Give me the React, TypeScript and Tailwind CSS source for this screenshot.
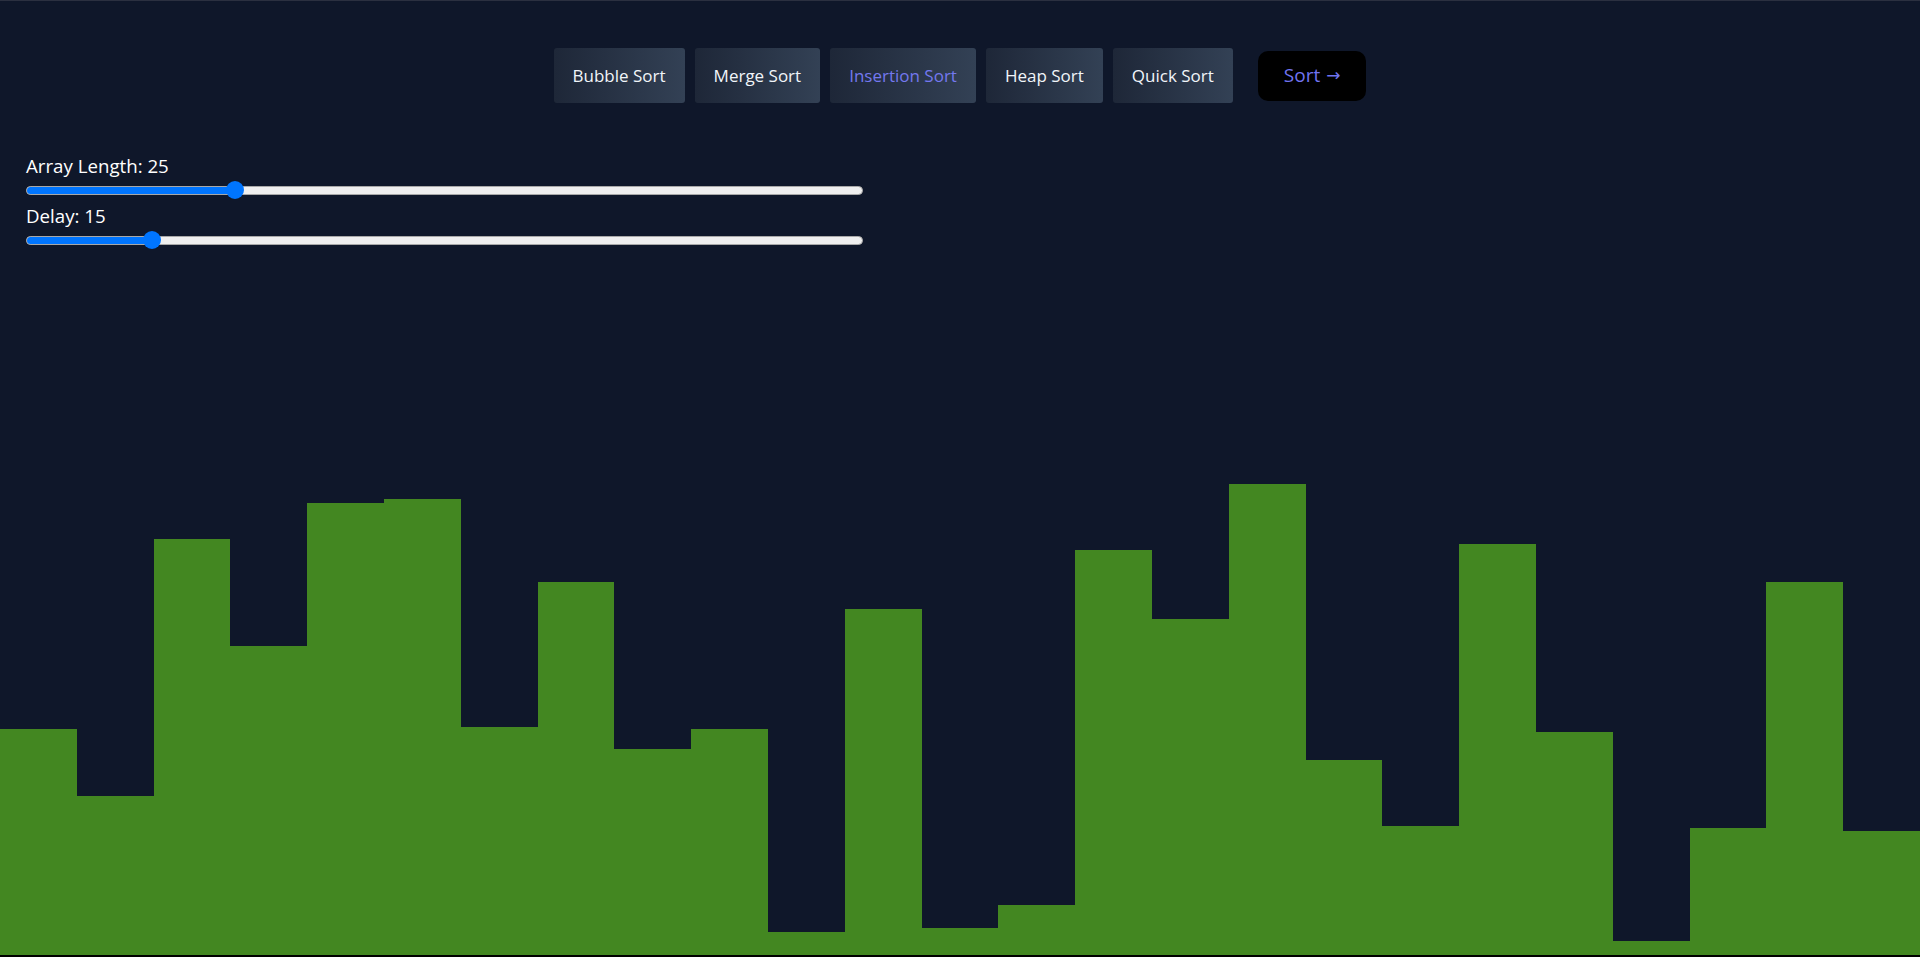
import React from "react";

const algorithms = [
  { name: "Bubble Sort", active: false },
  { name: "Merge Sort", active: false },
  { name: "Insertion Sort", active: true },
  { name: "Heap Sort", active: false },
  { name: "Quick Sort", active: false },
];

const bars = [226, 159, 416, 309, 452, 456, 228, 373, 206, 226, 23, 346, 27, 50, 405, 336, 471, 195, 129, 411, 223, 14, 127, 373, 124];

function Slider({ label, thumb }: { label: string; thumb: number }) {
  return (
    <div className="flex flex-col">
      <div className="text-[18.7px] leading-[26px] text-white">{label}</div>
      <div className="relative flex h-[22px] w-[837px] items-center">
        <div className="relative h-[9px] w-full overflow-hidden rounded-full border border-[#a8a8a8] bg-[#efefef]">
          <div className="h-full bg-[#0075ff]" style={{ width: thumb }} />
        </div>
        <div
          className="absolute top-[2px] h-[18px] w-[18px] rounded-full bg-[#0075ff]"
          style={{ left: thumb - 9 }}
        />
      </div>
    </div>
  );
}

export default function App() {
  return (
    <div
      className="flex h-screen flex-col overflow-hidden border-t border-[#2b3040] bg-[#0f172a]"
      style={{ fontFamily: '"Open Sans", "Noto Sans", "DejaVu Sans", sans-serif' }}
    >
      <div className="flex items-center justify-center gap-[10px] pt-[47px]">
        {algorithms.map((a) => (
          <button
            key={a.name}
            className={`flex h-[55px] items-center rounded-[3px] bg-gradient-to-r from-[#1e2738] to-[#334155] px-[19px] text-[17px] ${
              a.active ? "text-[#7478ef]" : "text-[#f1f5f9]"
            }`}
          >
            {a.name}
          </button>
        ))}
        <button className="ml-[15px] flex h-[50px] items-center gap-[6px] rounded-[10px] bg-black px-[26px] text-[19px] text-[#7074f0]">
          <span>Sort</span>
          <span className="text-[17px]" style={{ fontFamily: '"DejaVu Sans", sans-serif' }}>→</span>
        </button>
      </div>

      <div className="mt-[50px] flex flex-col gap-[2px] px-[26px]">
        <Slider label="Array Length: 25" thumb={209} />
        <Slider label="Delay: 15" thumb={126} />
      </div>

      <div className="flex flex-1 items-end border-b-2 border-black">
        {bars.map((h, i) => (
          <div key={i} className="flex-1 bg-[#438721]" style={{ height: h }} />
        ))}
      </div>
    </div>
  );
}
